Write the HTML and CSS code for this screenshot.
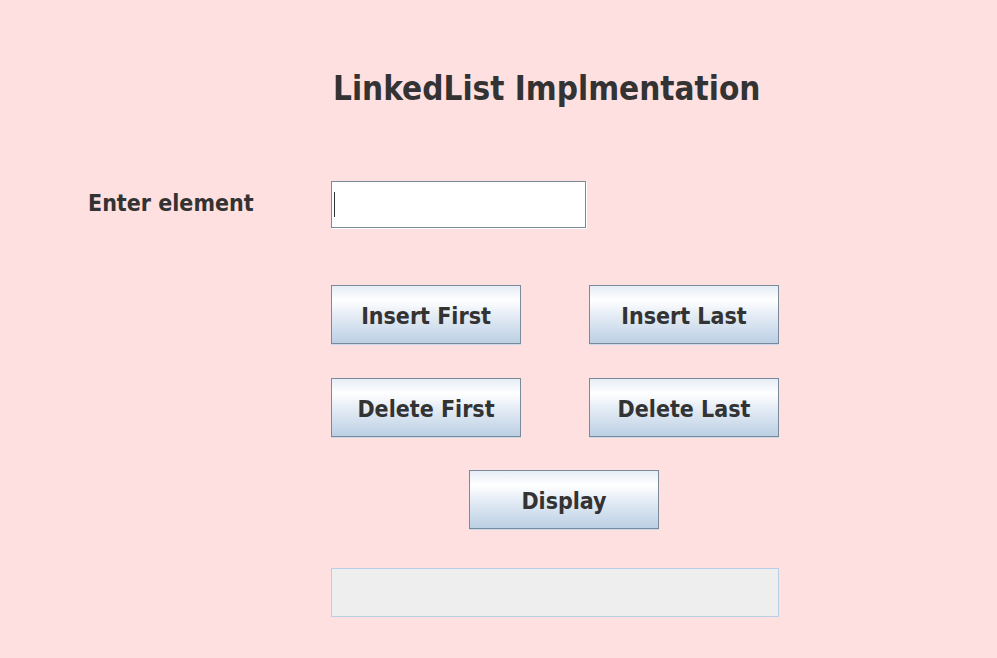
FILE: index.html
```html
<!DOCTYPE html>
<html>
<head>
<meta charset="utf-8">
<link rel="stylesheet" href="styles.css">
</head>
<body>
<div class="app">
  <h1 class="title">LinkedList Implmentation</h1>
  <div class="entry-row">
    <label class="entry-label" for="element">Enter element</label>
    <div class="field"><span class="caret"></span></div>
  </div>
  <div class="buttons">
    <button class="btn">Insert First</button>
    <button class="btn">Insert Last</button>
    <button class="btn">Delete First</button>
    <button class="btn">Delete Last</button>
  </div>
  <div class="display-row">
    <button class="btn">Display</button>
  </div>
  <div class="output"></div>
</div>
</body>
</html>
```
FILE: styles.css
```css
html, body {
  margin: 0;
  padding: 0;
  background: #ffe0e0;
  width: 997px;
  height: 658px;
  overflow: hidden;
}
.app {
  font-family: "DejaVu Sans Condensed", "DejaVu Sans", sans-serif;
  font-weight: bold;
  color: #333333;
  padding-top: 70px;
}
.title {
  margin: 0 0 0 333px;
  font-size: 33px;
  line-height: 38px;
  font-weight: bold;
}
.entry-row {
  display: flex;
  align-items: flex-start;
  margin-top: 73px;
}
.entry-label {
  width: 243px;
  margin-left: 88px;
  font-size: 23px;
  line-height: 24px;
  padding-top: 10px;
}
.field {
  width: 255px;
  height: 47px;
  box-sizing: border-box;
  background: #fff;
  border: 1px solid #7a8a99;
  box-shadow: 1px 1px 0 #ffffff;
  display: flex;
  align-items: center;
  padding-left: 2px;
}
.caret {
  width: 1px;
  height: 25px;
  background: #333;
}
.buttons {
  display: grid;
  grid-template-columns: 190px 190px;
  column-gap: 68px;
  row-gap: 34px;
  margin: 57px 0 0 331px;
}
.btn {
  width: 190px;
  height: 59px;
  box-sizing: border-box;
  border: 1px solid #7a8a99;
  border-radius: 0;
  background: linear-gradient(to bottom, #e6edf6 0%, #ffffff 25%, #e6edf6 50%, #bcd0e4 100%);
  box-shadow: 0 1px 0 #c8daec;
  font-family: "DejaVu Sans Condensed", "DejaVu Sans", sans-serif;
  font-weight: bold;
  font-size: 23px;
  color: #333333;
  padding: 2px 0 0 0;
}
.display-row {
  margin: 33px 0 0 469px;
}
.output {
  margin: 39px 0 0 331px;
  width: 448px;
  height: 49px;
  box-sizing: border-box;
  background: #eeeeee;
  border: 1px solid #b8cfe5;
}
```
